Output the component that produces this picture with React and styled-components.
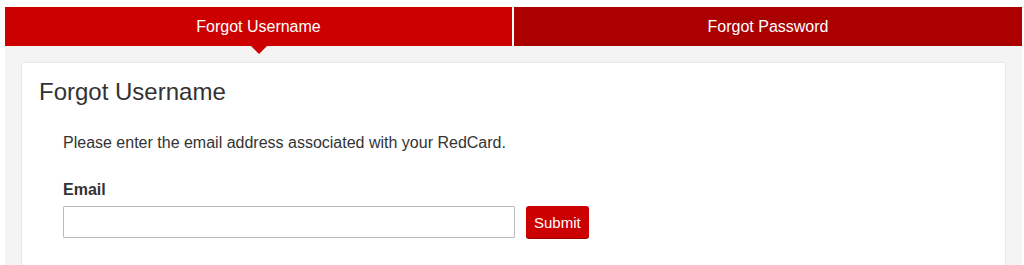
import React, {useState} from "react";
import styled, {createGlobalStyle} from "styled-components";

const GlobalStyle = createGlobalStyle`
  body {
    margin: 0;
    background: #fff;
    font-family: "Liberation Sans", Arial, sans-serif;
  }
`;

function App() {
  const [active, setActive] = useState("username");
  const [email, setEmail] = useState("");
  return (
    <Page>
      <GlobalStyle />
      <Tabs>
        <Tab $active={active === "username"} onClick={() => setActive("username")}>
          Forgot Username
        </Tab>
        <Tab $active={active === "password"} onClick={() => setActive("password")}>
          Forgot Password
        </Tab>
      </Tabs>
      <Panel>
        <Card>
          <Title>Forgot Username</Title>
          <Body>
            <Intro>Please enter the email address associated with your RedCard.</Intro>
            <Label htmlFor="email">Email</Label>
            <Row>
              <Input
                id="email"
                type="email"
                value={email}
                onChange={(e) => setEmail(e.target.value)}
              />
              <SubmitButton type="button">Submit</SubmitButton>
            </Row>
          </Body>
        </Card>
      </Panel>
    </Page>
  );
}

const Page = styled.div`
  padding: 7px 2px 0 5px;
`;

const Tabs = styled.div`
  display: grid;
  grid-template-columns: 507px 1fr;
  gap: 2px;
  position: relative;
  z-index: 1;
`;

const Tab = styled.div`
  position: relative;
  height: 39px;
  display: flex;
  align-items: center;
  justify-content: center;
  color: #fff;
  font-size: 16px;
  cursor: pointer;
  background: ${(p) => (p.$active ? "#cc0000" : "#aa0000")};
  &::after {
    content: "";
    display: ${(p) => (p.$active ? "block" : "none")};
    position: absolute;
    left: 50%;
    top: 100%;
    margin-left: -8px;
    border-left: 8px solid transparent;
    border-right: 8px solid transparent;
    border-top: 8px solid #cc0000;
  }
`;

const Panel = styled.div`
  background: #f4f4f4;
  padding: 16px 16px 0 16px;
  height: 219px;
  box-sizing: border-box;
`;

const Card = styled.div`
  background: #fff;
  border: 1px solid #e8e8e8;
  border-bottom: none;
  height: 100%;
  box-sizing: border-box;
  padding: 14px 17px 0;
`;

const Title = styled.h2`
  margin: 0;
  font-size: 24px;
  font-weight: normal;
  color: #333;
  line-height: 30px;
`;

const Body = styled.div`
  padding: 26px 0 0 24px;
`;

const Intro = styled.p`
  margin: 0;
  font-size: 16px;
  color: #333;
  line-height: 20px;
`;

const Label = styled.label`
  display: block;
  margin-top: 28px;
  font-size: 16px;
  font-weight: bold;
  color: #333;
  line-height: 18px;
`;

const Row = styled.div`
  display: flex;
  align-items: flex-start;
  gap: 11px;
  margin-top: 7px;
`;

const Input = styled.input`
  width: 452px;
  height: 32px;
  box-sizing: border-box;
  border: 1px solid #bbb;
  border-radius: 1px;
  padding: 4px 8px;
  font-size: 14px;
  font-family: inherit;
  outline: none;
`;

const SubmitButton = styled.button`
  height: 32px;
  padding: 0 8px;
  background: #cc0000;
  color: #fff;
  border: none;
  border-radius: 3px;
  box-shadow: 0 1px 0 #990000;
  font-size: 15px;
  font-family: inherit;
  cursor: pointer;
`;

export default App;
